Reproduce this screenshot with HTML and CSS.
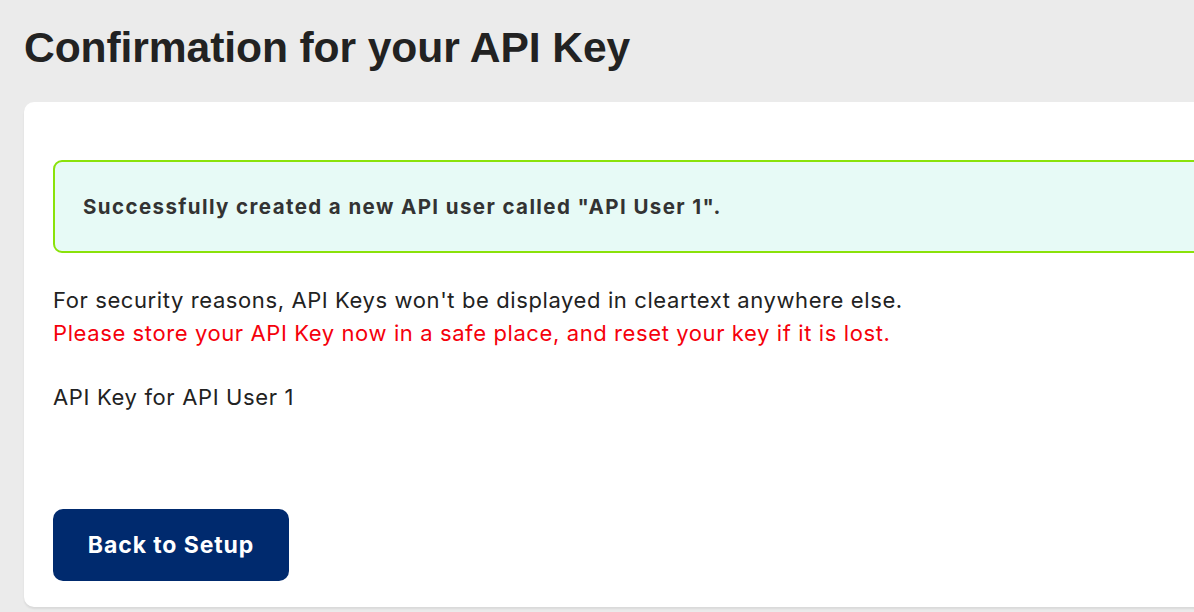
FILE: index.html
```html
<!DOCTYPE html>
<html lang="en">
<head>
<meta charset="utf-8">
<title>Confirmation for your API Key</title>
<link rel="stylesheet" href="styles.css">
</head>
<body>
<main class="page">
  <h1 class="page-title">Confirmation for your API Key</h1>
  <section class="card">
    <div class="alert-success">Successfully created a new API user called "API User 1".</div>
    <p class="info">For security reasons, API Keys won't be displayed in cleartext anywhere else.<br><span class="warn">Please store your API Key now in a safe place, and reset your key if it is lost.</span></p>
    <p class="key-label">API Key for API User 1</p>
    <button class="btn-primary" type="button">Back to Setup</button>
  </section>
</main>
</body>
</html>
```
FILE: styles.css
```css
html, body {
  margin: 0;
  padding: 0;
  height: 100%;
  overflow: hidden;
}
body {
  background: #ebebeb;
  font-family: Inter, "Liberation Sans", Arial, sans-serif;
  color: #222;
}
.page {
  padding: 0 0 0 24px;
}
.page-title {
  margin: 0;
  padding-top: 23px;
  height: 102px;
  box-sizing: border-box;
  font-family: "Liberation Sans", Arial, sans-serif;
  font-size: 42.6px;
  font-weight: bold;
  color: #222;
  line-height: 48px;
  letter-spacing: -0.1px;
}
.card {
  background: #fff;
  border-radius: 10px 0 0 10px;
  width: 1220px;
  height: 505px;
  box-sizing: border-box;
  padding: 58px 0 0 29px;
  box-shadow: 0 2px 2px rgba(0,0,0,0.08);
}
.alert-success {
  background: #e7faf6;
  border: 2px solid #8ae20a;
  border-radius: 9px;
  height: 93px;
  box-sizing: border-box;
  padding: 0 0 0 28px;
  display: flex;
  align-items: center;
  font-size: 20.5px;
  font-weight: bold;
  letter-spacing: 1.4px;
  color: #333;
}
.info {
  margin: 31px 0 0 0;
  font-size: 22px;
  letter-spacing: 0.6px;
  line-height: 33px;
  color: #222;
}
.warn {
  color: #f5000b;
}
.key-label {
  margin: 31px 0 0 0;
  font-size: 22px;
  letter-spacing: 0.65px;
  line-height: 33px;
  color: #222;
}
.btn-primary {
  margin-top: 95px;
  width: 236px;
  height: 72px;
  background: #002a6e;
  color: #fff;
  border: none;
  border-radius: 10px;
  font-family: Inter, "Liberation Sans", Arial, sans-serif;
  font-size: 23px;
  font-weight: bold;
  letter-spacing: 0.9px;
  padding: 0;
}
```
